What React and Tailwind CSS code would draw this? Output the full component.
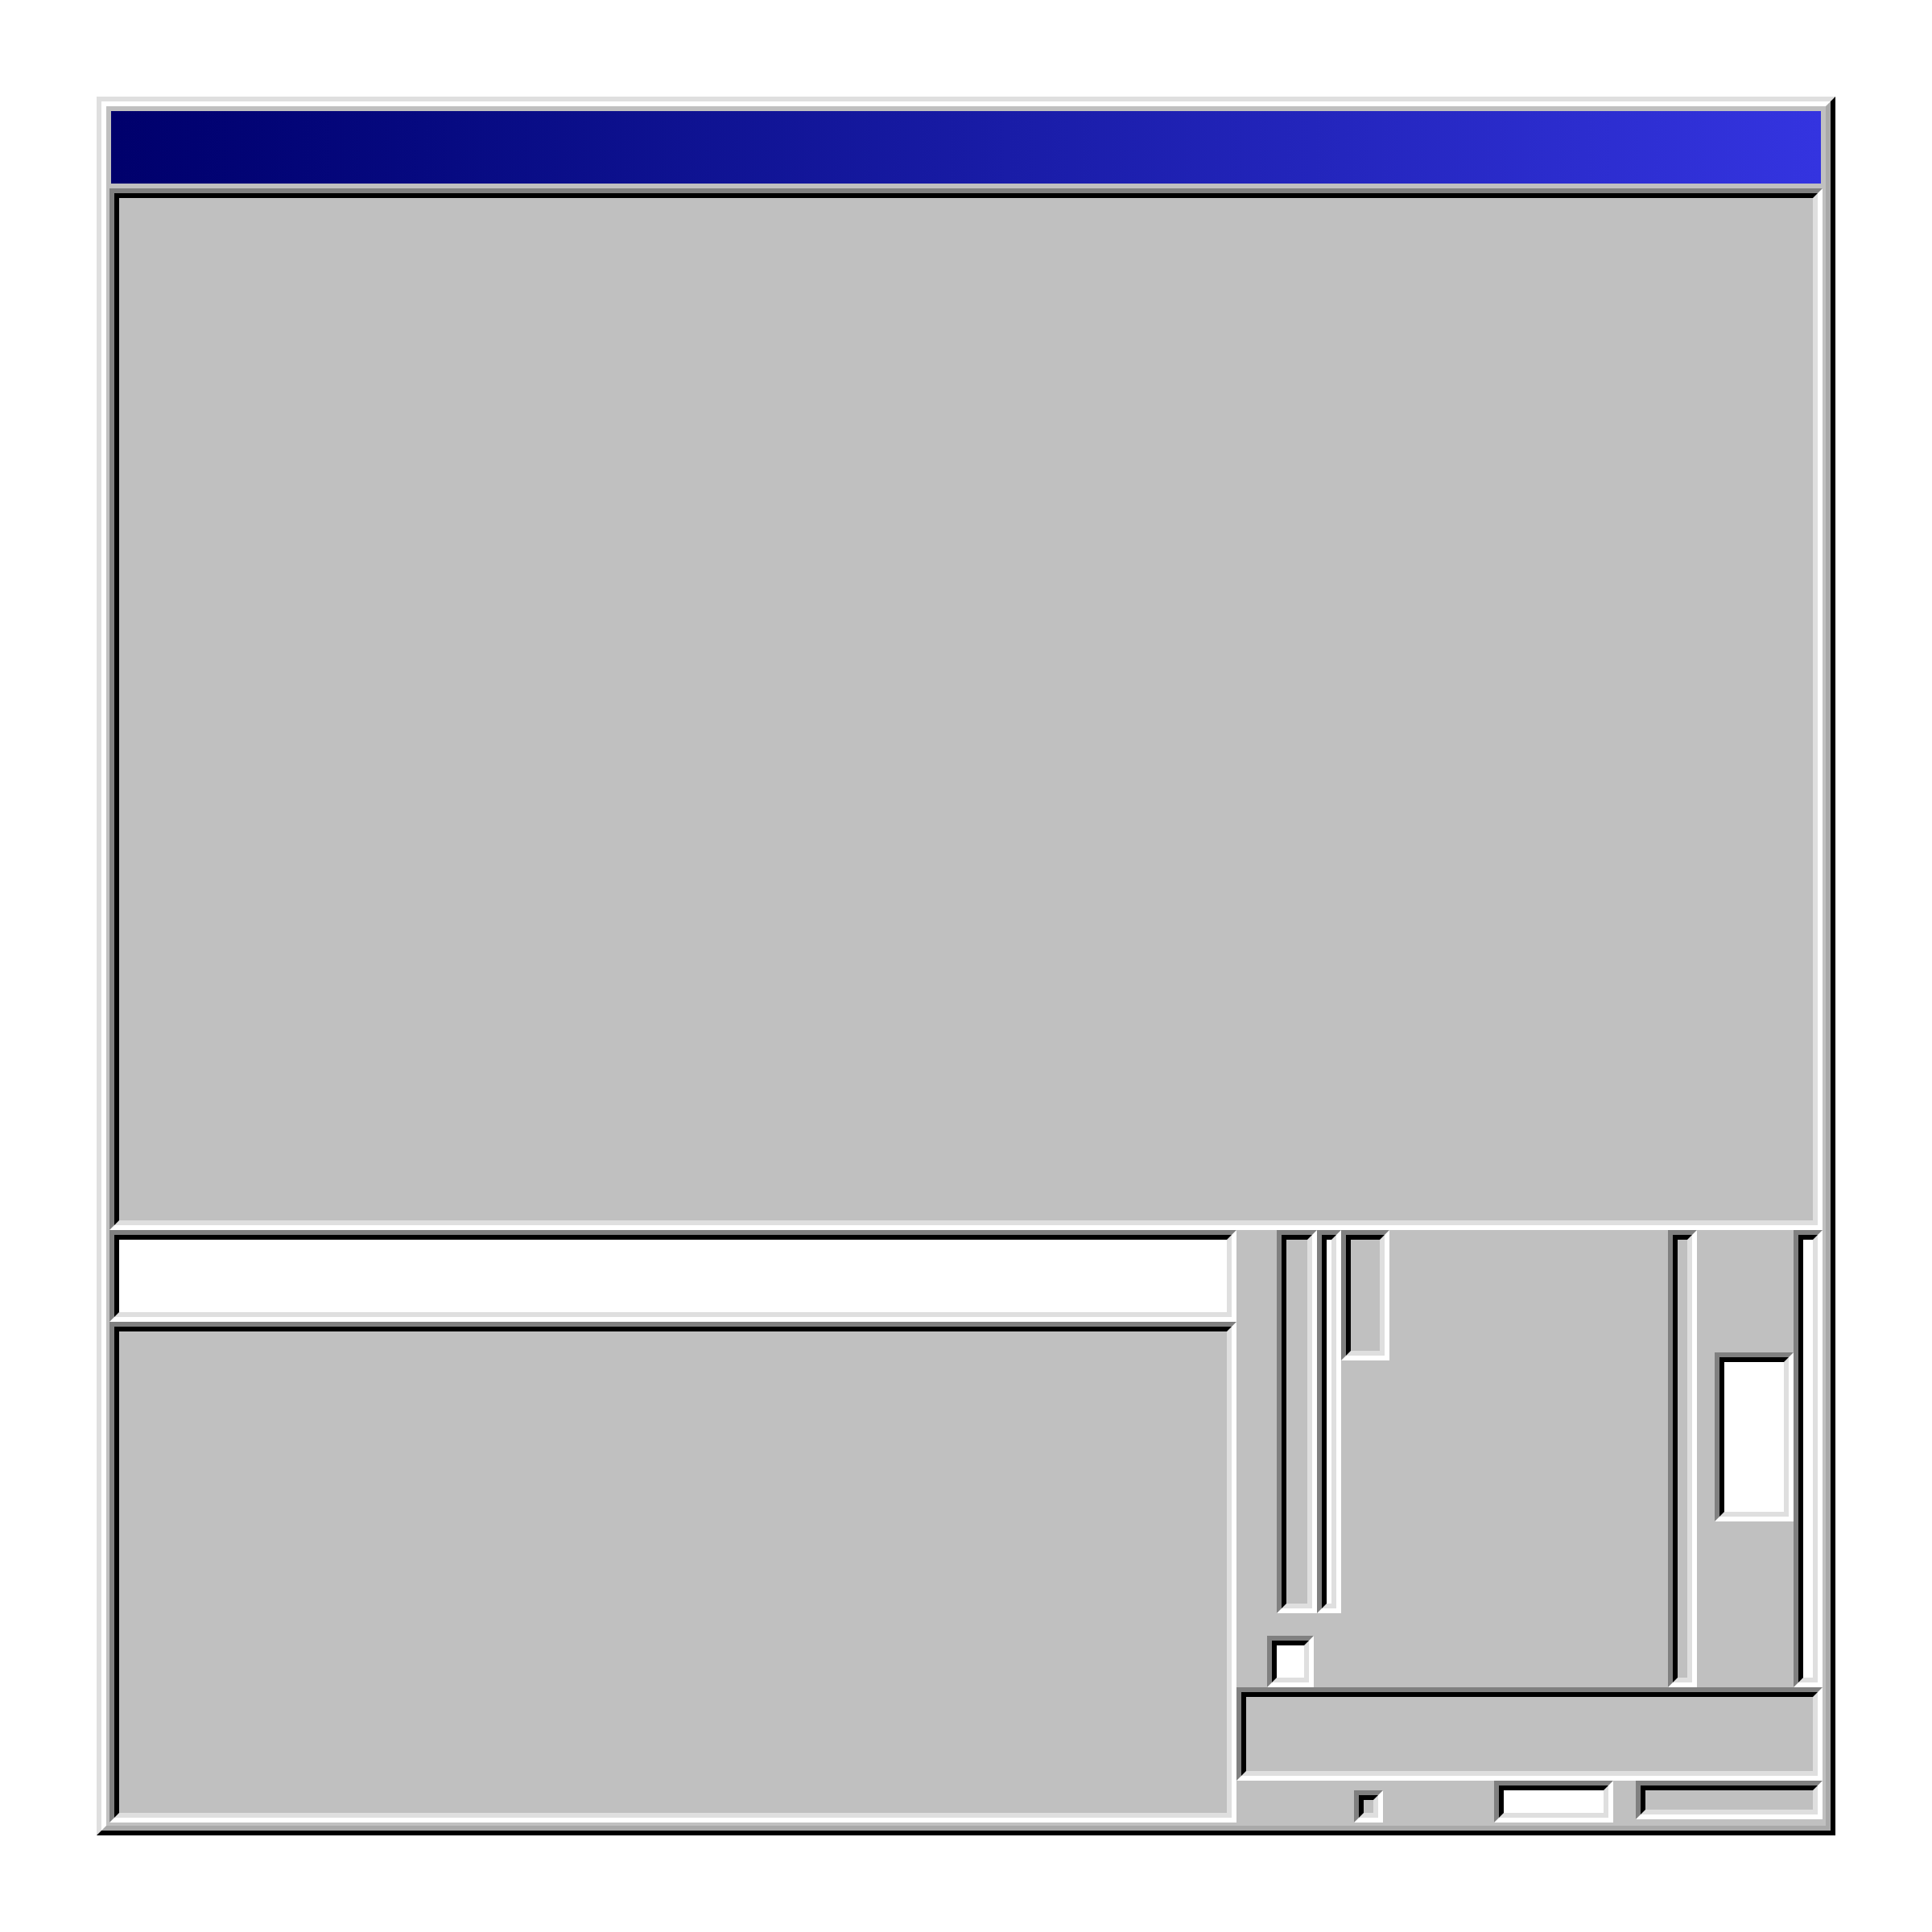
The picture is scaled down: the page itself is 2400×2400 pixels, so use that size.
import React from "react";

function Sunken({ className = "", fill = "bg-[#c0c0c0]" }) {
  return (
    <div
      className={`shrink-0 border-[6px] border-t-[#808080] border-l-[#808080] border-b-white border-r-white ${className}`}
    >
      <div
        className={`w-full h-full border-[6px] border-t-black border-l-black border-b-[#dfdfdf] border-r-[#dfdfdf] ${fill}`}
      />
    </div>
  );
}

export default function App() {
  return (
    <div className="w-[2400px] h-[2400px] bg-white pt-[120px] pl-[120px]">
      <div className="w-[2160px] h-[2160px] border-[6px] border-t-[#dfdfdf] border-l-[#dfdfdf] border-b-black border-r-black">
        <div className="w-full h-full border-[6px] border-t-white border-l-white border-b-[#a9a9a9] border-r-[#a9a9a9] bg-[#c0c0c0] flex flex-col">
          <div className="mx-[6px] mt-[6px] h-[90px] bg-gradient-to-r from-[#00006c] to-[#3434e0]" />
          <div className="mt-[6px] mx-[4px] flex flex-col">
            <Sunken className="w-[2128px] h-[1294px]" />
            <div className="flex">
              <div className="w-[1400px] flex flex-col">
                <Sunken className="w-[1400px] h-[114px]" fill="bg-white" />
                <Sunken className="w-[1400px] h-[622px]" />
              </div>
              <div className="w-[728px] flex flex-col">
                <div className="h-[568px] flex items-start">
                  <div className="w-[190px] flex flex-col">
                    <div className="pl-[50px] flex items-start">
                      <Sunken className="w-[50px] h-[476px]" />
                      <Sunken className="w-[30px] h-[476px]" fill="bg-white" />
                      <Sunken className="w-[60px] h-[162px]" />
                    </div>
                    <div className="mt-[28px] ml-[38px]">
                      <Sunken className="w-[58px] h-[64px]" fill="bg-white" />
                    </div>
                  </div>
                  <div className="ml-[346px]">
                    <Sunken className="w-[36px] h-[568px]" />
                  </div>
                  <div className="ml-[22px] mt-[152px]">
                    <Sunken className="w-[98px] h-[210px]" fill="bg-white" />
                  </div>
                  <Sunken className="w-[36px] h-[568px]" fill="bg-white" />
                </div>
                <Sunken className="w-[728px] h-[116px]" />
                <div className="h-[52px] flex items-start">
                  <div className="ml-[146px] mt-[12px]">
                    <Sunken className="w-[36px] h-[40px]" />
                  </div>
                  <div className="ml-[138px]">
                    <Sunken className="w-[148px] h-[52px]" fill="bg-white" />
                  </div>
                  <div className="ml-[28px]">
                    <Sunken className="w-[232px] h-[48px]" />
                  </div>
                </div>
              </div>
            </div>
          </div>
        </div>
      </div>
    </div>
  );
}
